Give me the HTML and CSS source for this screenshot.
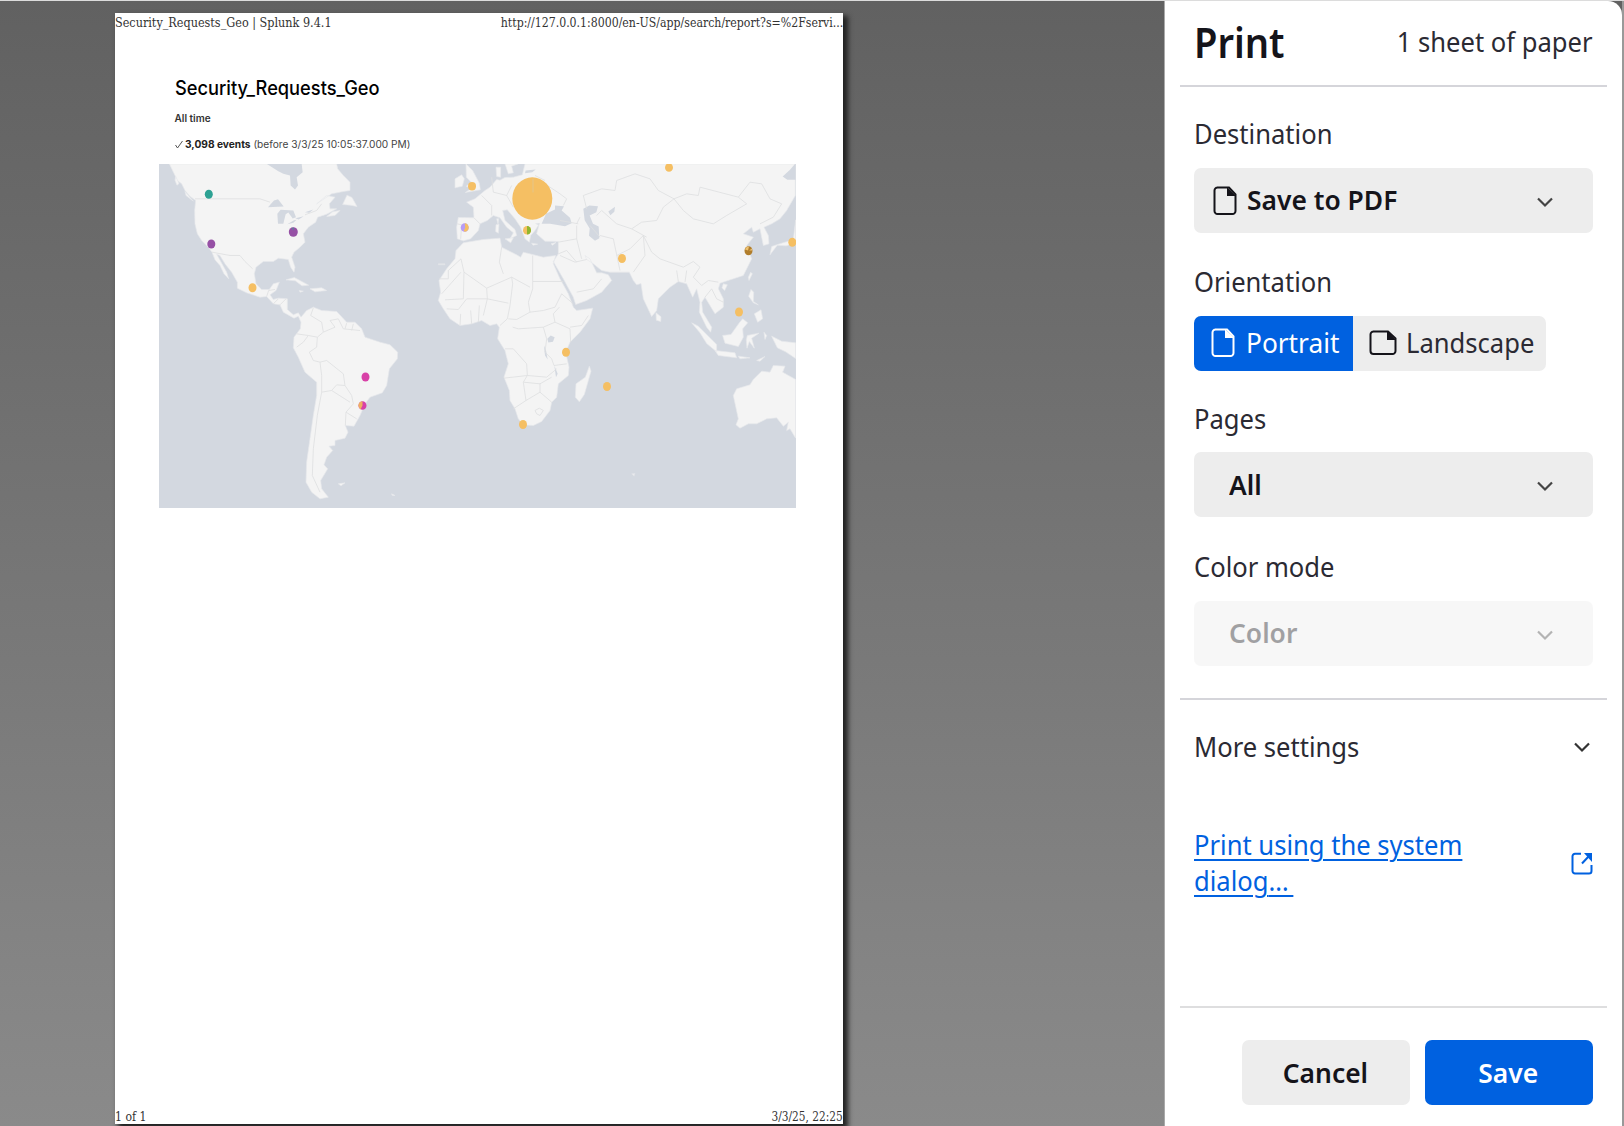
FILE: index.html
```html
<!DOCTYPE html>
<html lang="en">
<head>
<meta charset="utf-8">
<title>Print</title>
<link rel="stylesheet" href="styles.css">
</head>
<body>
<svg class="defs" width="0" height="0" aria-hidden="true">
  <symbol id="portrait" viewBox="0 0 24 30"><path d="M4 1.500h12l6.500 7V25a3 3 0 0 1-3 3H4.500a3 3 0 0 1-3-3V4.500a3 3 0 0 1 3-3z" fill="none" stroke="currentColor" stroke-width="2"/><path d="M14 1l9 9h-9z" fill="currentColor"/></symbol>
  <symbol id="landscape" viewBox="0 0 28 26"><path d="M4 1.500h15l7.500 7V21a3 3 0 0 1-3 3H4.500a3 3 0 0 1-3-3V4.500a3 3 0 0 1 3-3z" fill="none" stroke="currentColor" stroke-width="2"/><path d="M18 1l9 9h-9z" fill="currentColor"/></symbol>
  <symbol id="chevron" viewBox="0 0 16 11"><path d="M1 1.500l7 7 7-7" fill="none" stroke="currentColor" stroke-width="2.200"/></symbol>
</svg>
<div class="window">
  <div class="topline"></div>
  <main class="preview">
    <article class="sheet">
      <header class="runner"><span class="run-title">Security_Requests_Geo | Splunk 9.4.1</span><span class="run-url">http://127.0.0.1:8000/en-US/app/search/report?s=%2Fservi...</span></header>
      <section class="report">
        <h1><span>Security_Requests_Geo</span></h1>
        <p class="range"><span>All time</span></p>
        <p class="events"><svg width="8" height="9" viewBox="0 0 8 9"><path d="M.5 5l2 3L7.500 1" fill="none" stroke="#555"/></svg><span class="ev"><b>3,098 events</b> (before 3/3/25 10:05:37.000 PM)</span></p>
      </section>
      <svg class="map" viewBox="159 163.500 636.500 344" preserveAspectRatio="none">
        <rect x="159" y="163" width="637" height="345" fill="#d3d8e0"/>
        <g transform="translate(150 155) scale(.33333)">
          <g class="land">
            <path d="M58 25L75 60 82 75 95 85 105 105 120 122 137 135 134 165 135 205 142 235 155 255 175 275 186 290 195 313 210 330 222 355 236 370 230 350 216 325 205 305 200 296 210 300 225 325 245 350 262 380 262 398 290 412 330 425 350 423 370 445 390 448 400 470 432 488 445 482 453 500 451 520 432 545 430 577 445 605 465 650 500 680 500 720 490 780 480 850 470 920 468 980 485 1010 510 1030 535 1025 515 1000 512 975 533 940 522 928 530 905 548 885 537 872 555 870 555 855 585 848 594 830 586 810 612 812 630 780 645 745 660 725 697 712 710 690 718 640 742 610 743 590 720 568 690 560 645 545 635 520 615 500 590 500 560 468 515 465 490 455 470 465 453 485 445 472 430 478 412 462 412 430 385 428 370 432 360 418 378 405 388 380 370 385 358 402 335 402 318 385 313 355 318 335 340 318 370 318 385 308 415 312 422 335 432 350 435 335 425 305 432 290 450 275 465 260 460 235 475 215 497 200 503 185 530 176 560 160 540 160 538 145 555 125 530 120 500 145 545 115 580 108 600 105 600 80 580 60 563 40 560 25z"/>
            <path d="M578 147l13-28 15 7 15 27-20-4zM530 183l18-14 22-4-15 15zM408 373l25-7 43 23-20 2-20-15zM480 400l35-3 15 8-35 4zM448 405l12 2-10 3zM77 62l10 22-6 5-6-15zM105 108l17 20 8 9-22-17zM565 985l20-3-12 9zM725 1015l10 5-9-1z"/>
          </g>
          <g class="water"><path d="M350 25L385 47 400 55 420 60 422 90 435 102 444 90 440 65 458 50 455 25zM354 155l18-20 12-4 17 22-17 1zM384 205l-2-30 10-12 38 2 8 20-10 4-13-18-8 5-7 29zM412 206l20-12 8-1-10 9zM436 188l25-6-15 10zM465 170l25-8-12 10z"/></g>
          <g class="border"><path d="M135 130H330L360 140M465 178L500 165 515 145M186 290L240 300 270 300 285 318 308 340M350 423L356 405 375 402M370 445L385 430M390 448L408 430M490 457L482 480 515 500 520 530 502 545 475 540 440 535M475 540L460 560 440 575M502 545L500 575 478 590 490 615 510 620 530 615 580 655 585 690 605 720 610 745 588 770 620 790M510 620L515 660 515 710 545 705 560 688 585 690M545 705L600 740M588 770L586 810M515 710L502 780 490 880 487 960 510 1010M520 530L555 515 540 495 565 490 580 520 630 525M590 503L585 520M610 505L605 525"/></g>
        </g>
        <g transform="translate(400 155) scale(.33333)">
          <g class="land">
            <path d="M375 25L367 58 340 65 315 66 300 74 290 72 270 95 255 105 225 130 200 140 220 155 222 187 175 186 170 215 172 250 190 256 212 250 235 225 240 205 262 195 280 180 300 187 320 215 340 232 330 250 350 240 345 222 315 195 308 165 322 163 345 190 362 215 375 250 388 260 392 240 405 225 418 205 410 235 435 257 475 258 475 295 460 318 490 370 520 425 527 447 560 435 605 410 635 375 625 358 605 352 590 352 570 310 555 300 560 312 580 325 605 345 630 350 688 350 700 375 710 388 723 384 730 430 755 483 770 465 775 430 810 395 835 378 860 385 878 425 890 400 900 440 898 470 920 515 932 530 935 515 920 490 908 470 905 440 915 425 930 450 945 475 970 455 970 430 955 400 960 383 975 378 1030 360 1055 310 1040 270 1060 245 1030 235 1055 215 1060 230 1080 220 1085 245 1090 270 1107 265 1105 240 1092 215 1115 205 1140 190 1160 165 1186 120 1186 25zM190 262L250 252 300 248 305 275 350 298 362 305 370 290 430 305 467 300 460 325 480 370 505 415 520 455 530 465 578 458 570 490 540 530 510 560 497 590 507 635 505 660 475 685 470 725 455 740 450 765 425 798 400 810 370 808 355 790 345 760 330 735 328 705 312 665 325 625 315 585 293 550 298 515 290 505 270 510 245 495 215 505 180 510 150 490 130 460 115 435 122 410 117 375 140 340 165 310 168 285z"/>
            <path d="M568 632l5 15-20 70-15 22-12-14 2-40 28-20zM198 25l20 20 20 38 3 20-45 8 18-12-15-7 15-12-15-15zM165 70l20-12 8 12-6 22-22 5zM315 25l10 30 15-3-5-20 20-7zM288 35l14 0 0 30-12-2zM315 250l25-3-8 15zM288 208l9-2-2 27-8-5zM290 190l6 0-2 15zM395 263l18 3-14 3zM453 265l15-4-10 8zM768 472l15 12-1 14-13-4zM875 502l20 10 55 55 0 22-30-25-20-32zM945 585l60 7 5 15-55-7zM968 540l25-3 25-35 10-12 15 12-15 18 2 25-15 28-40-10zM1042 540l35-7-22 15 8 30-15-20-7 20-2-25zM1053 402l8 8-1 28 15 10-15-6-14-20zM1063 475l20-12 5 27-15 10zM1052 350l5 5-10 20-2-10zM970 385l12 3-8 17-8-8zM1110 298l5-25 30-10 35-10 7-60v68l-28 10-27-2zM1115 542l30 15 42 5v47l-30-20-25-12zM1092 530l8 10-5 12zM1015 602l35 5-30 3zM1070 615l25-12-15 14zM1000 720L1010 700 1050 688 1060 672 1085 647 1110 650 1120 630 1155 632 1148 650 1187 672V848L1170 820 1160 825 1165 800 1150 812 1130 787 1100 790 1070 805 1045 805 1020 818 1008 808 1015 790z"/>
            <path d="M695 955l10-1-3 8zM115 325h20v3h-20z" opacity=".7"/>
          </g>
          <g class="water"><path d="M425 205L438 175 465 162 465 150 492 152 485 165 510 187 515 203 495 212 450 205zM550 160l18-10 26 2-5 18-20 10 10 25 17 8 2 35-13 8-18-15 2-22-15-25zM1148 63l22-20 17-20v50l-25 0zM442 550l10-10 12 5-5 14-14 2zM432 570l3 30 8 12-5-28zM463 630l5 35 5-10zM625 168l20-14-2 15-12 10zM377 45l30-3-10 8-22 3zM405 205l15-2-5 5z"/></g>
          <g class="border"><path d="M183 310L192 350 260 398 335 365 338 385 330 450 322 490 300 510M192 350L190 430 135 433M117 370H145V345L183 310M183 350L125 415M305 275L298 320 310 355M398 300V378H490M398 378V400L385 440 390 470 430 465 465 455 485 415 520 445M335 365L390 395M260 398L262 430 200 430 175 462 140 460M262 430L250 480M262 430L325 443M215 505L212 465M235 500L238 450M180 510L182 475M325 490L350 492 390 470M338 515L355 520 430 515 440 550 435 590 455 610 462 630 500 625M315 580L340 580 380 625 382 660 312 668M382 660L440 665 470 640M382 660L370 680 378 735 340 760M370 680L420 685 455 665M378 735L420 710 455 740M420 685L420 710M430 515L465 500 460 475 478 455M465 500L510 520 512 560M510 515L545 510 565 480M405 765L418 758 430 765 420 780 410 775zM222 187L240 205M172 205L185 208 182 250M245 120L275 150 275 180M275 65L280 110 320 120 335 90M320 120L340 155M405 60L435 75M490 150L500 130 480 115 435 85M560 160L550 120 605 100 645 105 650 75 705 55 750 70 775 105 822 130M600 245L570 210M475 260L530 250 530 210M530 250L545 310M475 295L500 285 530 320M480 300L525 320 560 312M530 410L580 400 605 370M590 180L605 165 650 205 695 220 740 245M600 240L640 250 660 345M650 300L690 280 730 240 755 290 780 310 850 335 880 318 900 335 880 365 905 390 925 375 955 380M822 130L790 155 770 195 725 200 695 220M822 130L860 115 895 120 900 95 1015 125 1040 145 980 180 940 205 880 190 850 165 822 130M1015 125L1050 80 1085 85 1110 130 1145 145 1120 185 1080 205M700 350L735 300 730 240M830 345L835 378M855 380L860 345M915 425L935 400 950 430 970 440M480 195L535 205M530 205L540 185"/></g>
        </g>
        <g fill="#f5bf63">
          <ellipse cx="532.300" cy="198" rx="20" ry="21.200"/><path d="M533 178V192" stroke="#d8c9a4" stroke-width=".6"/>
          <ellipse cx="252.500" cy="287.300" rx="4" ry="4.500"/><ellipse cx="472" cy="185.800" rx="4" ry="4.200"/><ellipse cx="566" cy="351.800" rx="4" ry="4.500"/><ellipse cx="607" cy="386" rx="4" ry="4.500"/><ellipse cx="523" cy="424" rx="4" ry="4.500"/><ellipse cx="622" cy="258" rx="4" ry="4.500"/><ellipse cx="669" cy="167" rx="4" ry="4.300"/><ellipse cx="739" cy="311.500" rx="4" ry="4.500"/><ellipse cx="792.300" cy="241.700" rx="4" ry="4.500"/>
          <ellipse cx="464.700" cy="227" rx="4" ry="4.300" fill="#b79cf5"/><path d="M464.700 222.700a4 4.300 0 0 1 0 8.600l-1-1 1.500-3z"/>
          <ellipse cx="527" cy="229.800" rx="4" ry="4.300"/><path d="M527 225.500a4 4.300 0 0 1 0 8.600z" fill="#8fb62f"/>
          <ellipse cx="748.500" cy="250.300" rx="4" ry="4.500" fill="#b17e2c"/><path d="M745 249q1-3 4-3l-1 4zM749 250l3-2v2z" fill="#edc06e"/>
        </g>
        <g><ellipse cx="208.800" cy="193.700" rx="4" ry="4.500" fill="#2da193"/><ellipse cx="211.300" cy="243.500" rx="4" ry="4.500" fill="#9650a5"/><ellipse cx="293.300" cy="231.500" rx="4.500" ry="4.800" fill="#9650a5"/><path d="M291.500 227.200l2 3 .5-3z" fill="#5b8299"/><ellipse cx="365.500" cy="376.500" rx="4" ry="4.500" fill="#d841a7"/><ellipse cx="362.500" cy="405" rx="4" ry="4.300" fill="#d841a7"/><path d="M362.500 400.700v4.300l-2 4q-4-4-.5-7.500z" fill="#eeb060"/></g>
      </svg>
      <footer class="runner foot"><span class="run-page">1 of 1</span><span class="run-date">3/3/25, 22:25</span></footer>
    </article>
  </main>
  <aside class="panel">
    <div class="panel-head"><h2><span>Print</span></h2><span class="text count">1 sheet of paper</span></div>
    <div class="settings">
      <div class="label"><span class="text">Destination</span></div>
      <div class="select"><svg class="doc" width="24" height="30"><use href="#portrait"/></svg><span class="text strong">Save to PDF</span><svg class="chev" width="16" height="11"><use href="#chevron"/></svg></div>
      <div class="label"><span class="text">Orientation</span></div>
      <div class="toggle"><div class="opt on"><svg width="24" height="30"><use href="#portrait"/></svg><span class="text">Portrait</span></div><div class="opt off"><svg width="28" height="26"><use href="#landscape"/></svg><span class="text">Landscape</span></div></div>
      <div class="label pages"><span class="text">Pages</span></div>
      <div class="select plain"><span class="text strong">All</span><svg class="chev" width="16" height="11"><use href="#chevron"/></svg></div>
      <div class="label"><span class="text">Color mode</span></div>
      <div class="select plain disabled"><span class="text strong">Color</span><svg class="chev" width="16" height="11"><use href="#chevron"/></svg></div>
    </div>
    <div class="more"><span class="text">More settings</span><svg width="16" height="11"><use href="#chevron"/></svg></div>
    <div class="system"><a class="text">Print using the system<br>dialog<span class="dots">…</span></a><svg width="22" height="23" viewBox="0 0 22 23"><path d="M10 1.800H4A2.500 2.500 0 0 0 1.500 4.300V19A2.500 2.500 0 0 0 4 21.500H18A2.500 2.500 0 0 0 20.500 19V13" fill="none" stroke="#0061e0" stroke-width="2"/><path d="M11 11.500L18 4" stroke="#0061e0" stroke-width="2"/><path d="M13 1h8v9z" fill="#0061e0"/></svg></div>
    <div class="actions"><div class="btn"><span class="text strong">Cancel</span></div><div class="btn primary"><span class="text strong">Save</span></div></div>
  </aside>
  <div class="edge"></div>
</div>
</body>
</html>
```
FILE: styles.css
```css
* { box-sizing: border-box; }
body { margin: 0; overflow: hidden; }
h1, h2, p { margin: 0; }
svg { display: block; flex: none; }
.defs { position: absolute; }
.window { width: 1624px; height: 1126px; display: grid; grid-template: 1px 1125px / 1165px 457px 2px; background: linear-gradient(#616161, #8a8a8a); font-family: "Noto Sans", sans-serif; color: #15141a; }
.topline { grid-column: 1 / -1; background: #dcdcdc; }
.preview { padding: 12px 0 0 115px; border-right: 1px solid #aaa; }
.sheet { width: 728px; height: 1111px; background: #fff; display: flex; flex-direction: column; box-shadow: 4px 4px 5px 1px #222; }
.runner { display: flex; justify-content: space-between; height: 20px; line-height: 19px; font-family: "DejaVu Serif Condensed", "DejaVu Serif", serif; font-size: 12.500px; color: #333; white-space: nowrap; }
.runner span { display: block; transform-origin: left; }
.runner .run-url, .runner .run-date { transform-origin: right; }
.run-title { transform: scaleX(1); }
.run-url { transform: scaleX(.975); }
.run-page { transform: scaleX(.97); }
.run-date { transform: scaleX(.94); }
.report { height: 130.500px; padding: 42px 0 0 59.500px; font-family: Inter, sans-serif; white-space: nowrap; }
.report span { display: inline-block; transform-origin: left; }
.report h1 { font-size: 20px; font-weight: 500; line-height: 26px; color: #000; }
.report h1 span { transform: scaleX(.912); }
.report .range { font-size: 10px; font-weight: 600; line-height: 14px; margin-top: 10px; color: #333; }
.report .events { display: flex; align-items: center; gap: 2px; font-size: 10px; line-height: 14px; margin-top: 12px; color: #444; }
.report .ev { transform: scaleX(1.018); }
.events b { color: #222; }
.map { width: 636.500px; height: 344px; margin-left: 44px; }
.land { fill: #f4f4f4; stroke: #e7e9eb; stroke-width: 2; }
.water { fill: #d3d8e0; }
.border { fill: none; stroke: #dfe0e1; stroke-width: 2.500; stroke-linejoin: round; }
.foot { margin-top: auto; height: 17.500px; }
.panel { background: #fff; border-top-right-radius: 14px; padding: 0 15.500px 0 14.500px; display: flex; flex-direction: column; }
.edge { background: #999; }
.text { display: inline-block; font-size: 27.500px; line-height: 36px; white-space: nowrap; transform: scaleX(.93); transform-origin: left; color: #2b2a33; }
.strong { font-weight: 600; color: #15141a; transform: scaleX(.96); }
.panel-head { height: 86px; display: flex; justify-content: space-between; align-items: center; padding: 0 14px 3px; border-bottom: 2px solid #d5d5da; }
.panel-head h2 { font-size: 41px; line-height: 50px; font-weight: 600; }
.panel-head h2 span { display: block; transform: scaleX(.93); transform-origin: left; }
.count { transform-origin: right; }
.settings { height: 613px; padding: 28.500px 14px 0; border-bottom: 2px solid #d5d5da; }
.label { height: 36px; margin-bottom: 16px; }
.select { height: 65px; border-radius: 7px; background: #ededed; display: flex; align-items: center; padding: 0 39.500px 0 19px; margin-bottom: 31.500px; }
.select .doc { margin-right: 10px; margin-top: 2px; }
.select .chev { margin-left: auto; margin-top: 4px; color: #444; }
.select.plain { padding-left: 35px; }
.disabled { opacity: .4; }
.toggle { display: flex; width: 352px; height: 55px; border-radius: 7px; overflow: hidden; background: #ededed; margin-bottom: 30px; }
.opt { display: flex; align-items: center; gap: 11px; padding-left: 17px; padding-bottom: 1px; }
.opt.on { width: 159px; background: #0061e0; color: #fff; }
.opt.on .text { color: #fff; transform: scaleX(.955); }
.opt.off { padding-left: 16px; gap: 9px; }
.pages { margin-bottom: 15px; }
.more { height: 94px; padding: 0 17px 0 14px; display: flex; align-items: center; justify-content: space-between; color: #333; }
.system { display: flex; align-items: center; justify-content: space-between; height: 72px; margin-top: 33px; padding: 0 14px; }
.system .text { color: #0061e0; text-decoration: underline; text-decoration-thickness: 2px; text-underline-offset: 4px; }
.dots { letter-spacing: 5px; }
.actions { margin-top: auto; height: 120px; border-top: 2px solid #dededf; padding: 32px 14px 0; display: flex; justify-content: flex-end; gap: 15px; }
.btn { width: 168px; height: 65px; border-radius: 7px; background: #ededed; display: flex; align-items: center; justify-content: center; }
.btn .text { transform-origin: center; }
.primary { background: #0061e0; }
.primary .text { color: #fff; }
```
